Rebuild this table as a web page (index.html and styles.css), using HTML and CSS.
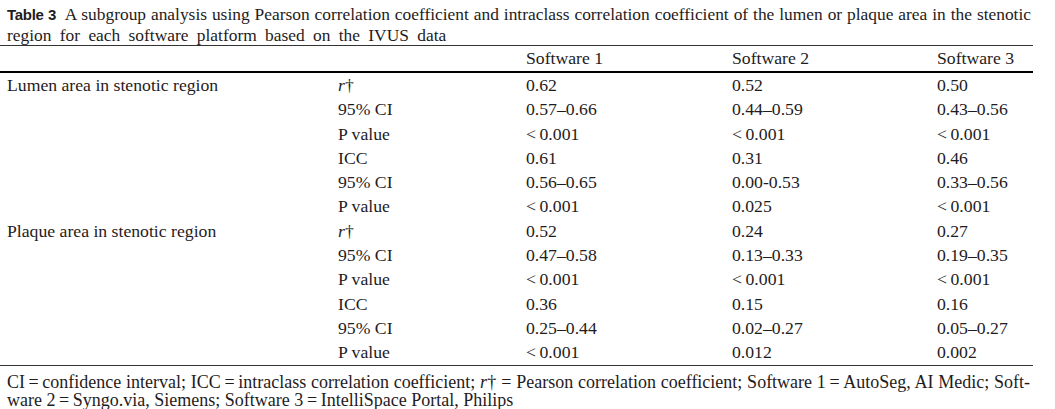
FILE: index.html
```html
<!DOCTYPE html>
<html>
<head>
<meta charset="utf-8">
<link rel="stylesheet" href="styles.css">
</head>
<body>
<div class="wrap">
  <div class="caption">
    <span class="line full"><span class="label">Table 3</span>&ensp;A subgroup analysis using Pearson correlation coefficient and intraclass correlation coefficient of the lumen or plaque area in the stenotic</span>
    <span class="line last">region for each software platform based on the IVUS data</span>
  </div>
  <table class="data">
    <colgroup>
      <col class="c1"><col class="c2"><col class="c3"><col class="c4"><col class="c5">
    </colgroup>
    <thead>
      <tr><th></th><th></th><th>Software 1</th><th>Software 2</th><th>Software 3</th></tr>
    </thead>
    <tbody>
      <tr><td>Lumen area in stenotic region</td><td><i>r</i>†</td><td>0.62</td><td>0.52</td><td>0.50</td></tr>
      <tr><td></td><td>95% CI</td><td>0.57–0.66</td><td>0.44–0.59</td><td>0.43–0.56</td></tr>
      <tr><td></td><td>P value</td><td>&lt;&#8201;0.001</td><td>&lt;&#8201;0.001</td><td>&lt;&#8201;0.001</td></tr>
      <tr><td></td><td>ICC</td><td>0.61</td><td>0.31</td><td>0.46</td></tr>
      <tr><td></td><td>95% CI</td><td>0.56–0.65</td><td>0.00-0.53</td><td>0.33–0.56</td></tr>
      <tr><td></td><td>P value</td><td>&lt;&#8201;0.001</td><td>0.025</td><td>&lt;&#8201;0.001</td></tr>
      <tr><td>Plaque area in stenotic region</td><td><i>r</i>†</td><td>0.52</td><td>0.24</td><td>0.27</td></tr>
      <tr><td></td><td>95% CI</td><td>0.47–0.58</td><td>0.13–0.33</td><td>0.19–0.35</td></tr>
      <tr><td></td><td>P value</td><td>&lt;&#8201;0.001</td><td>&lt;&#8201;0.001</td><td>&lt;&#8201;0.001</td></tr>
      <tr><td></td><td>ICC</td><td>0.36</td><td>0.15</td><td>0.16</td></tr>
      <tr><td></td><td>95% CI</td><td>0.25–0.44</td><td>0.02–0.27</td><td>0.05–0.27</td></tr>
      <tr><td></td><td>P value</td><td>&lt;&#8201;0.001</td><td>0.012</td><td>0.002</td></tr>
    </tbody>
  </table>
  <div class="foot">
    <span class="line full">CI&#8201;=&#8201;confidence interval; ICC&#8201;=&#8201;intraclass correlation coefficient; <i>r</i>† = Pearson correlation coefficient; Software 1&#8201;=&#8201;AutoSeg, AI Medic; Soft-</span>
    <span class="line">ware 2&#8201;=&#8201;Syngo.via, Siemens; Software 3&#8201;=&#8201;IntelliSpace Portal, Philips</span>
  </div>
</div>
</body>
</html>
```
FILE: styles.css
```css
html, body {
  margin: 0;
  padding: 0;
  background: #ffffff;
}
body {
  font-family: "Liberation Serif", "Times New Roman", serif;
  color: #1f1c1d;
}
.wrap {
  width: 1033px;
}
.line {
  display: block;
  white-space: nowrap;
}
.line.full {
  text-align: justify;
  text-align-last: justify;
  white-space: normal;
}
.caption {
  padding: 4px 2px 0 7px;
  font-size: 17.4px;
  line-height: 21px;
  height: 41px;
}
.caption .last {
  word-spacing: 4px;
}
.label {
  font-family: "Liberation Sans", Arial, sans-serif;
  font-weight: bold;
  font-size: 15px;
  letter-spacing: -0.3px;
}
.data {
  width: 1033px;
  border-collapse: collapse;
  table-layout: fixed;
  font-size: 17.7px;
}
.c1 { width: 331px; }
.c2 { width: 188px; }
.c3 { width: 206px; }
.c4 { width: 205px; }
.c5 { width: 103px; }
.data th, .data td {
  padding: 0 0 0 7px;
  text-align: left;
  font-weight: normal;
  white-space: nowrap;
  vertical-align: middle;
}
.data thead tr {
  border-top: 1px solid #333;
  border-bottom: 2px solid #000;
}
.data th {
  height: 24px;
  line-height: 25px;
}
.data td {
  height: 24.3px;
  line-height: 24.3px;
}
.data tbody tr:last-child td {
  height: 23.5px;
}
.data tbody tr:last-child {
  border-bottom: 1px solid #333;
}
.foot {
  padding: 7px 3px 0 7px;
  font-size: 18px;
  line-height: 18px;
}
```
